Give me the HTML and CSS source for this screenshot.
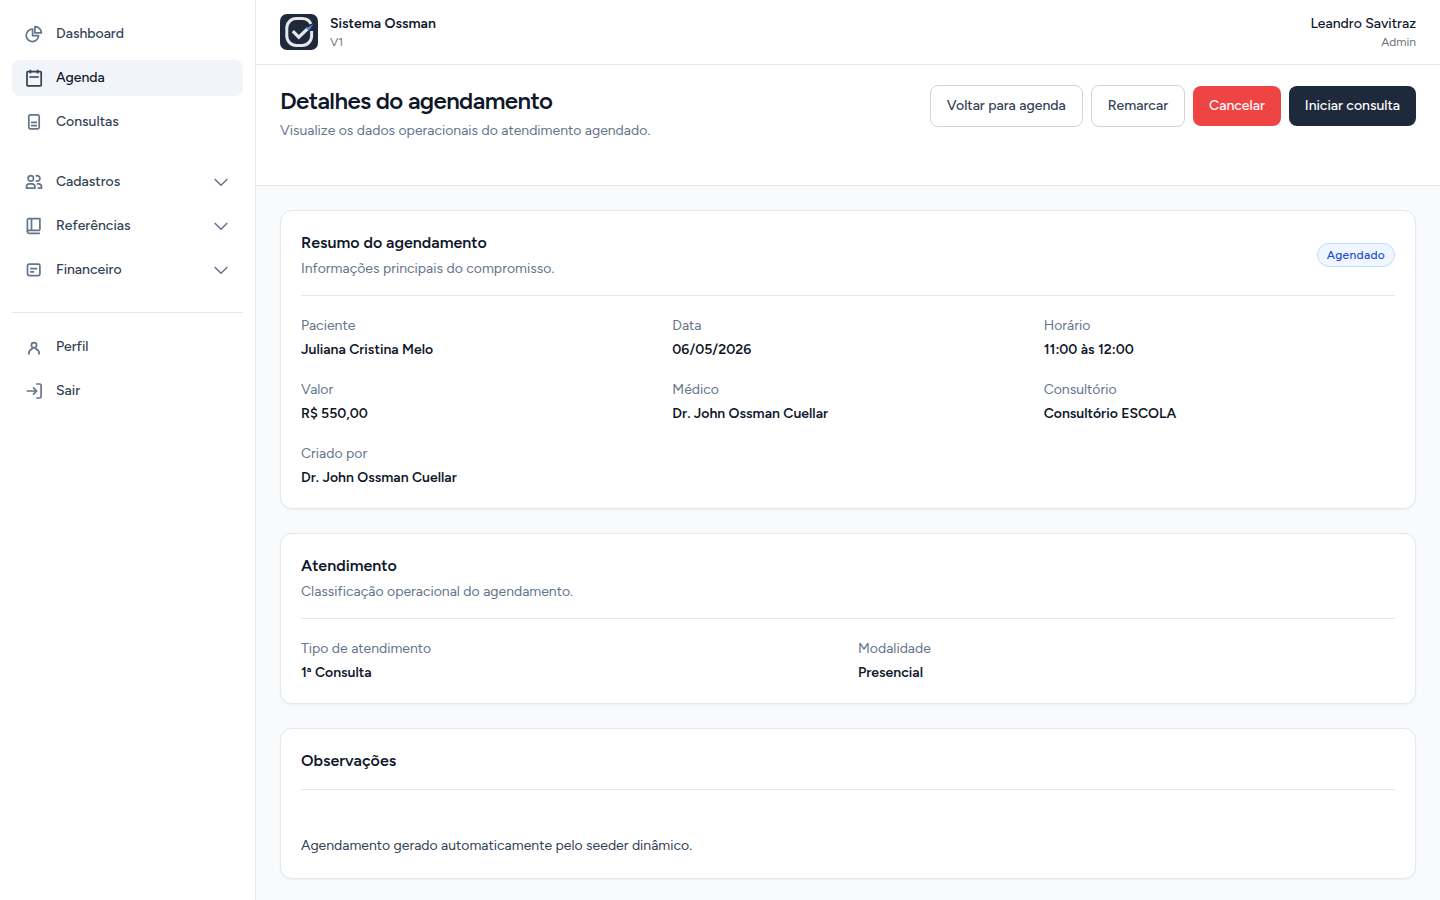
FILE: index.html
```html
<!DOCTYPE html>
<html lang="pt-BR">
<head>
    <meta charset="UTF-8">
    <meta name="viewport" content="width=device-width, initial-scale=1.0">
    <title>Detalhes do agendamento - Sistema Ossman</title>
    <link rel="stylesheet" href="styles.css">
</head>
<body>
    <div class="layout">
        <aside class="sidebar">
            <nav class="menu">
                <a href="#" class="menu-item">
                    <svg class="icon" viewBox="0 0 20 20"><path d="M8.6 5.2a6.2 6.2 0 1 0 6 6.4h-6z"/><path d="M10.9 2.7v6.2h6.5a6.4 6.4 0 0 0-6.5-6.2z"/></svg>
                    <span>Dashboard</span>
                </a>
                <a href="#" class="menu-item active">
                    <svg class="icon" viewBox="0 0 20 20"><rect x="3" y="3.6" width="14.2" height="14.2" rx="0.8"/><path d="M6.4 1.8v3.8M13.6 1.8v3.8M5.4 9h9.4"/></svg>
                    <span>Agenda</span>
                </a>
                <a href="#" class="menu-item">
                    <svg class="icon" viewBox="0 0 20 20"><rect x="4.8" y="2.9" width="10.4" height="14" rx="1.6"/><path d="M7 10.4h6M7 13.6h6"/></svg>
                    <span>Consultas</span>
                </a>
            </nav>

            <nav class="menu">
                <button type="button" class="menu-item">
                    <svg class="icon" viewBox="0 0 20 20"><circle cx="6.8" cy="6.4" r="2.7"/><path d="M11.6 4.2a2.7 2.7 0 1 1 0 4.4"/><path d="M2.5 16.2v-1.4c0-2 1.2-3 3-3h2.4c1.8 0 3 1 3 3v1.4z"/><path d="M12.8 11.8h1.6c2 0 3.1 1 3.1 3v1.4h-3.7"/></svg>
                    <span>Cadastros</span>
                    <svg class="chevron" viewBox="0 0 20 20"><path d="M3.7 7l6.3 6.2L16.3 7"/></svg>
                </button>
                <button type="button" class="menu-item">
                    <svg class="icon" viewBox="0 0 20 20"><path d="M15.9 14.3V2.6H5a1.6 1.6 0 0 0-1.6 1.6v11.7"/><path d="M15.9 14.3H5a1.5 1.5 0 0 0 0 3.1h10.9M7.5 2.6v11.7"/></svg>
                    <span>Referências</span>
                    <svg class="chevron" viewBox="0 0 20 20"><path d="M3.7 7l6.3 6.2L16.3 7"/></svg>
                </button>
                <button type="button" class="menu-item">
                    <svg class="icon" viewBox="0 0 20 20"><rect x="3.5" y="4.2" width="12.4" height="11.4" rx="1.6"/><path d="M6.2 8.6h7M6.2 11.8h4"/></svg>
                    <span>Financeiro</span>
                    <svg class="chevron" viewBox="0 0 20 20"><path d="M3.7 7l6.3 6.2L16.3 7"/></svg>
                </button>
            </nav>

            <nav class="menu menu-user">
                <a href="#" class="menu-item">
                    <svg class="icon" viewBox="0 0 20 20"><circle cx="10" cy="8.2" r="2.6"/><path d="M4.8 17.6v-.8a5.3 5.3 0 0 1 3.2-4.9l1-.8M15.2 17.6v-.8a5.3 5.3 0 0 0-3.2-4.9l-1-.8"/></svg>
                    <span>Perfil</span>
                </a>
                <a href="#" class="menu-item">
                    <svg class="icon" viewBox="0 0 20 20"><path d="M2.6 10h10M9 6.3l3.7 3.7L9 13.7"/><path d="M12.2 3h3.4a1.5 1.5 0 0 1 1.5 1.5v11a1.5 1.5 0 0 1-1.5 1.5h-3.4"/></svg>
                    <span>Sair</span>
                </a>
            </nav>
        </aside>

        <div class="main">
            <header class="topbar">
                <div class="brand">
                    <svg class="logo" viewBox="0 0 38 36">
                        <rect width="38" height="36" rx="7" fill="#1e293b"/>
                        <path d="M31.6 17v5a9.4 9.4 0 0 1-9.4 9.4h-6A9.4 9.4 0 0 1 6.800 22v-8a9.400 9.400 0 0 1 9.400-9.400h6c4 0 7.200 2 8.700 5.400" fill="none" stroke="#e5e7eb" stroke-width="3"/>
                        <path d="M12.800 17.200l6 6L28 14.400" fill="none" stroke="#e5e7eb" stroke-width="3.200"/>
                        <path d="M26 14.400l7.200-4.200-4.400 6.600z" fill="#4a90e2"/>
                    </svg>
                    <div>
                        <div class="brand-name">Sistema Ossman</div>
                        <div class="small">V1</div>
                    </div>
                </div>
                <div class="user">
                    <div class="user-name">Leandro Savitraz</div>
                    <div class="small">Admin</div>
                </div>
            </header>

            <div class="page-header">
                <div>
                    <h1>Detalhes do agendamento</h1>
                    <p class="subtitle">Visualize os dados operacionais do atendimento agendado.</p>
                </div>
                <div class="actions">
                    <button type="button" class="btn btn-outline">Voltar para agenda</button>
                    <button type="button" class="btn btn-outline">Remarcar</button>
                    <button type="button" class="btn btn-danger">Cancelar</button>
                    <button type="button" class="btn btn-dark">Iniciar consulta</button>
                </div>
            </div>

            <main class="content">
                <section class="card">
                    <div class="card-header">
                        <div>
                            <h2>Resumo do agendamento</h2>
                            <p class="subtitle">Informações principais do compromisso.</p>
                        </div>
                        <span class="badge">Agendado</span>
                    </div>
                    <dl class="fields cols-3">
                        <div>
                            <dt>Paciente</dt>
                            <dd>Juliana Cristina Melo</dd>
                        </div>
                        <div>
                            <dt>Data</dt>
                            <dd>06/05/2026</dd>
                        </div>
                        <div>
                            <dt>Horário</dt>
                            <dd>11:00 às 12:00</dd>
                        </div>
                        <div>
                            <dt>Valor</dt>
                            <dd>R$ 550,00</dd>
                        </div>
                        <div>
                            <dt>Médico</dt>
                            <dd>Dr. John Ossman Cuellar</dd>
                        </div>
                        <div>
                            <dt>Consultório</dt>
                            <dd>Consultório ESCOLA</dd>
                        </div>
                        <div>
                            <dt>Criado por</dt>
                            <dd>Dr. John Ossman Cuellar</dd>
                        </div>
                    </dl>
                </section>

                <section class="card">
                    <div class="card-header">
                        <div>
                            <h2>Atendimento</h2>
                            <p class="subtitle">Classificação operacional do agendamento.</p>
                        </div>
                    </div>
                    <dl class="fields cols-2">
                        <div>
                            <dt>Tipo de atendimento</dt>
                            <dd>1ª Consulta</dd>
                        </div>
                        <div>
                            <dt>Modalidade</dt>
                            <dd>Presencial</dd>
                        </div>
                    </dl>
                </section>

                <section class="card">
                    <div class="card-header">
                        <h2>Observações</h2>
                    </div>
                    <p class="notes">Agendamento gerado automaticamente pelo seeder dinâmico.</p>
                </section>
            </main>
        </div>
    </div>
</body>
</html>
```
FILE: styles.css
```css
* {
    margin: 0;
    padding: 0;
    box-sizing: border-box;
}

body {
    font-family: Figtree, Inter, sans-serif;
    font-size: 14px;
    line-height: 20px;
    color: #0f172a;
    background-color: #f8fafc;
}

.layout {
    display: flex;
    min-height: 100vh;
}

/* Sidebar */
.sidebar {
    width: 256px;
    flex-shrink: 0;
    padding: 16px 12px;
    background-color: #fff;
    border-right: 1px solid #e5e7eb;
}

.menu {
    display: flex;
    flex-direction: column;
    gap: 8px;
    margin-bottom: 24px;
}

.menu-user {
    padding-top: 16px;
    border-top: 1px solid #e5e7eb;
}

.menu-item {
    display: flex;
    align-items: center;
    gap: 12px;
    height: 36px;
    padding: 0 12px;
    border: none;
    border-radius: 8px;
    background: none;
    font: inherit;
    font-weight: 500;
    color: #334155;
    text-decoration: none;
    cursor: pointer;
}

.menu-item:hover {
    background-color: #f8fafc;
}

.menu-item.active {
    background-color: #f1f5f9;
    color: #0f172a;
}

.icon,
.chevron {
    width: 20px;
    height: 20px;
    fill: none;
    stroke: #64748b;
    stroke-width: 1.7;
    stroke-linejoin: round;
}

.active .icon {
    stroke: #334155;
}

.chevron {
    margin-left: auto;
    stroke-width: 1.5;
}

/* Topbar */
.main {
    flex: 1;
    min-width: 0;
}

.topbar {
    display: flex;
    justify-content: space-between;
    align-items: center;
    height: 65px;
    padding: 0 24px;
    background-color: #fff;
    border-bottom: 1px solid #e5e7eb;
}

.brand {
    display: flex;
    align-items: center;
    gap: 12px;
}

.logo {
    width: 38px;
    height: 36px;
}

.brand-name {
    font-weight: 600;
}

.user {
    text-align: right;
}

.user-name {
    font-weight: 500;
}

.small {
    font-size: 12px;
    line-height: 16px;
    color: #6b7280;
}

/* Page header */
.page-header {
    display: flex;
    justify-content: space-between;
    align-items: flex-start;
    gap: 16px;
    padding: 20px 24px 44px;
    background-color: #fff;
    border-bottom: 1px solid #e5e7eb;
}

h1 {
    font-size: 24px;
    line-height: 32px;
    font-weight: 600;
    letter-spacing: -0.025em;
}

.subtitle {
    margin-top: 4px;
    color: #64748b;
}

.actions {
    display: flex;
    align-items: center;
    gap: 8px;
}

.btn {
    padding: 10px 16px;
    border: none;
    border-radius: 8px;
    font: inherit;
    font-weight: 500;
    white-space: nowrap;
    cursor: pointer;
}

.btn-outline {
    border: 1px solid #cbd5e1;
    background-color: #fff;
    color: #334155;
}

.btn-danger {
    background-color: #ef4444;
    color: #fff;
}

.btn-dark {
    background-color: #1e293b;
    color: #fff;
}

/* Cards */
.content {
    display: flex;
    flex-direction: column;
    gap: 24px;
    padding: 24px 24px 20px;
}

.card {
    padding: 20px;
    background-color: #fff;
    border: 1px solid #e2e8f0;
    border-radius: 12px;
    box-shadow: 0 1px 2px rgba(0, 0, 0, 0.05);
}

.card-header {
    display: flex;
    justify-content: space-between;
    align-items: center;
    padding-bottom: 16px;
    margin-bottom: 20px;
    border-bottom: 1px solid #e2e8f0;
}

h2 {
    font-size: 16px;
    line-height: 24px;
    font-weight: 600;
}

.badge {
    padding: 3px 9px;
    border: 1px solid #bfdbfe;
    border-radius: 12px;
    background-color: #eff6ff;
    color: #1d4ed8;
    font-size: 12px;
    line-height: 16px;
    font-weight: 500;
    letter-spacing: 0.025em;
}

.fields {
    display: grid;
    gap: 20px;
}

.cols-3 {
    grid-template-columns: repeat(3, 1fr);
}

.cols-2 {
    grid-template-columns: repeat(2, 1fr);
}

dt {
    color: #64748b;
}

dd {
    margin-top: 4px;
    font-weight: 600;
}

.notes {
    padding-top: 24px;
    line-height: 24px;
    color: #334155;
}
```
